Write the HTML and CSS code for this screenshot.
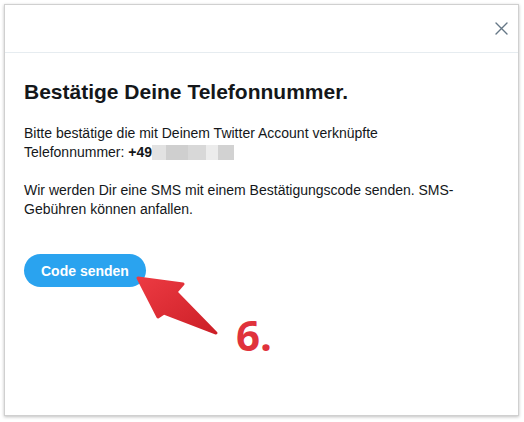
FILE: index.html
```html
<!DOCTYPE html>
<html lang="de">
<head>
    <meta charset="UTF-8">
    <meta name="viewport" content="width=device-width, initial-scale=1.0">
    <title>Telefonnummer bestätigen</title>
    <link rel="stylesheet" href="styles.css">
</head>
<body>
    <div class="modal">
        <!-- Header with close button -->
        <div class="modal-header">
            <button class="close" aria-label="Schließen">
                <svg width="13" height="13" viewBox="0 0 13 13">
                    <path d="M1 1 L12 12 M12 1 L1 12" stroke="#657786" stroke-width="1.4" fill="none" stroke-linecap="round"/>
                </svg>
            </button>
        </div>

        <!-- Body -->
        <div class="modal-body">
            <h1>Bestätige Deine Telefonnummer.</h1>
            <p>Bitte bestätige die mit Deinem Twitter Account verknüpfte Telefonnummer: <b>+49</b><span class="blur"><i class="b1"></i><i class="b2"></i><i class="b3"></i><i class="b4"></i><i class="b5"></i></span></p>
            <p>Wir werden Dir eine SMS mit einem Bestätigungscode senden. SMS-Gebühren können anfallen.</p>
            <button class="send">Code senden</button>

            <!-- Annotation -->
            <svg class="arrow" width="100" height="70" viewBox="130 270 100 70">
                <defs>
                    <linearGradient id="red" x1="0" y1="0" x2="1" y2="1">
                        <stop offset="0" stop-color="#ec3a42"/>
                        <stop offset="1" stop-color="#cc1f27"/>
                    </linearGradient>
                </defs>
                <polygon points="138,278 183,284 176,292 216,333 164,313 158,317" fill="url(#red)" stroke="url(#red)" stroke-width="3" stroke-linejoin="round"/>
            </svg>
            <span class="step">6.</span>
        </div>
    </div>
</body>
</html>
```

FILE: styles.css
```css
body {
    font-family: "Liberation Sans", Arial, sans-serif;
    margin: 0;
    padding: 0;
    background-color: #ffffff;
}
.modal {
    margin: 4px;
    width: 513px;
    height: 410px;
    border: 1px solid #d0d0d0;
    box-shadow: 0 1px 3px rgba(0, 0, 0, 0.25);
    background: #ffffff;
    display: flex;
    flex-direction: column;
}
.modal-header {
    height: 47px;
    border-bottom: 1px solid #e6ecf0;
    display: flex;
    justify-content: flex-end;
    align-items: center;
    padding-right: 10px;
}
.close {
    background: none;
    border: none;
    padding: 0;
    width: 13px;
    height: 13px;
    cursor: pointer;
    display: flex;
}
.modal-body {
    position: relative;
    flex: 1;
    padding: 0 19px;
    color: #14171a;
}
h1 {
    font-size: 21px;
    font-weight: bold;
    margin: 25px 0 18px;
    line-height: 28px;
}
p {
    font-size: 14px;
    line-height: 19px;
    margin: 0 0 19px;
    max-width: 440px;
}
.blur {
    display: inline-flex;
    vertical-align: -3px;
    height: 15px;
}
.blur i {
    display: block;
    height: 15px;
    background: #d6d6d6;
}
.blur .b1 { width: 14px; background: #e2e2e2; }
.blur .b2 { width: 22px; background: #cfcfcf; }
.blur .b3 { width: 18px; background: #d8d8d8; }
.blur .b4 { width: 12px; background: #ececec; }
.blur .b5 { width: 16px; background: #d2d2d2; }
.send {
    margin-top: 16px;
    height: 33px;
    padding: 0 17px;
    background-color: #2aa3ef;
    color: #ffffff;
    font-family: "Liberation Sans", Arial, sans-serif;
    font-size: 14px;
    font-weight: bold;
    border: none;
    border-radius: 17px;
    cursor: pointer;
}
/* Annotation overlay */
.arrow {
    position: absolute;
    left: 125px;
    top: 217px;
}
.step {
    position: absolute;
    left: 231px;
    top: 253px;
    font-family: "Open Sans", sans-serif;
    font-weight: 700;
    font-size: 42px;
    color: #e0323c;
}
```
